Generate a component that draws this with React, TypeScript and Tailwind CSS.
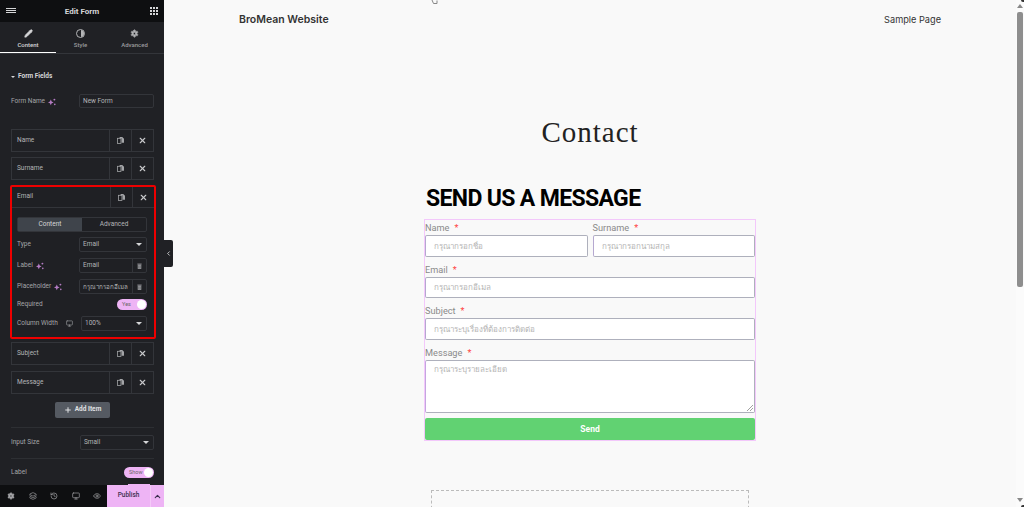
import React from 'react';
import { ChevronLeft, ChevronUp, Eye, History, Layers, Monitor, Pencil, Plus, Settings, X } from 'lucide-react';

function Sparkle() {
  return (
    <svg width="8" height="8" viewBox="0 0 10 10" className="ml-[3px] shrink-0" fill="#b57cc4">
      <path d="M3.5 2 L4.6 4.4 L7 5.5 L4.6 6.6 L3.5 9 L2.4 6.6 L0 5.5 L2.4 4.4 Z" />
      <circle cx="8" cy="2" r="1.2" />
      <circle cx="8.5" cy="8" r="1" />
    </svg>
  );
}

function CloneIcon() {
  return (
    <svg width="7" height="7" viewBox="0 0 8 8" fill="none" className="text-[#a4a5a8]">
      <rect x="0.5" y="1.5" width="4" height="6" stroke="currentColor" strokeWidth="0.9" />
      <path d="M3 0 H6 L8 2 V6.5 H5.2 V1.3 H3 Z" fill="currentColor" />
    </svg>
  );
}

function TrashIcon() {
  return (
    <svg width="5" height="6" viewBox="0 0 7 8" fill="none" className="text-[#a4a5a8]">
      <path d="M0.5 1.2 H6.5" stroke="currentColor" strokeWidth="1" />
      <path d="M1 2 H6 V8 H1 Z" fill="currentColor" />
      <path d="M2.5 3 V7 M4.5 3 V7" stroke="#202125" strokeWidth="0.6" />
    </svg>
  );
}

function RowActions() {
  return (
    <>
      <div className="flex w-[22px] items-center justify-center border-l border-[#33353a]">
        <CloneIcon />
      </div>
      <div className="flex w-[22px] items-center justify-center border-l border-[#33353a]">
        <X size={9} strokeWidth={3} color="#c8c9cb" />
      </div>
    </>
  );
}

function FieldRow({ name }: { name: string }) {
  return (
    <div className="flex h-[23px] items-stretch border border-[#33353a] text-[6.5px] text-[#b4b5b7]">
      <div className="flex flex-1 items-center pl-[5px]">{name}</div>
      <RowActions />
    </div>
  );
}

function SelectBox({ value, className }: { value: string; className: string }) {
  return (
    <div className={`flex h-[15px] items-center justify-between rounded-[2px] border border-[#33353a] px-[3px] text-[6.5px] text-[#b4b5b7] ${className}`}>
      <span>{value}</span>
      <span className="mr-[1px] h-0 w-0 border-x-[3px] border-t-[3px] border-x-transparent border-t-[#d5d6d8]" />
    </div>
  );
}

function TextWithTrash({ value, thai }: { value: string; thai?: boolean }) {
  return (
    <div className="flex h-[15px] w-[68px] items-stretch rounded-[2px] border border-[#33353a] text-[#b4b5b7]">
      <span className={`flex w-[52px] items-center overflow-hidden whitespace-nowrap pl-[3px] ${thai ? "font-['Noto_Sans',sans-serif] text-[6.2px]" : 'text-[6.5px]'}`}>{value}</span>
      <span className="flex flex-1 items-center justify-center border-l border-[#33353a]">
        <TrashIcon />
      </span>
    </div>
  );
}

function Toggle({ text }: { text: string }) {
  return (
    <div className="flex h-[11px] w-[30px] items-center justify-between rounded-full bg-[#eeb4f5] pl-[5px] pr-[1px] text-[5.5px] text-[#666]">
      <span>{text}</span>
      <span className="h-[9px] w-[9px] rounded-full bg-white" />
    </div>
  );
}

function PanelTab({ icon, label, active }: { icon: React.ReactNode; label: string; active?: boolean }) {
  return (
    <div className={`flex flex-1 flex-col items-center pt-[7px] text-[6px] ${active ? 'border-b border-white text-[#d5d6d8]' : 'text-[#9a9b9e]'}`}>
      {icon}
      <span className="mt-[2px]">{label}</span>
    </div>
  );
}

function EditorPanel() {
  return (
    <aside className="relative z-10 flex h-full w-[164px] shrink-0 flex-col bg-[#202125] font-['Roboto',sans-serif]">
      <header className="relative flex h-[22px] shrink-0 items-center justify-center bg-[#0e0f11] pt-[1px] text-[8px] font-bold text-[#d5d6d8]">
        <div className="absolute left-[6px] top-[8px] flex w-[10px] flex-col gap-[1px]">
          <span className="h-[1px] bg-[#d5d6d8]" />
          <span className="h-[1px] bg-[#d5d6d8]" />
          <span className="h-[1px] bg-[#d5d6d8]" />
        </div>
        Edit Form
        <div className="absolute right-[6px] top-[7px] grid grid-cols-3 gap-[1px]">
          {Array.from({ length: 9 }).map((_, i) => (
            <span key={i} className="h-[2px] w-[2px] bg-[#d5d6d8]" />
          ))}
        </div>
      </header>

      <div className="flex h-[32px] shrink-0 border-b border-[#33353a] font-medium">
        <div className="flex w-[56px]">
          <PanelTab active label="Content" icon={<Pencil size={9} fill="#d5d6d8" strokeWidth={2} />} />
        </div>
        <div className="flex w-[49px]">
          <PanelTab
            label="Style"
            icon={
              <span className="flex h-[9px] w-[9px] overflow-hidden rounded-full border border-[#b4b5b7]">
                <span className="w-1/2 bg-transparent" />
                <span className="w-1/2 bg-[#b4b5b7]" />
              </span>
            }
          />
        </div>
        <div className="flex flex-1">
          <PanelTab label="Advanced" icon={<Settings size={9} fill="#b4b5b7" strokeWidth={2} className="[&>circle]:fill-[#202125]" />} />
        </div>
      </div>

      <div className="min-h-0 flex-1 overflow-hidden pl-[11px] pr-[10px]">
        <div className="mt-[17px] flex h-[10px] items-center pt-[2px] text-[6.5px] font-bold text-[#d5d6d8]">
          <span className="mr-[3px] h-0 w-0 border-x-[2px] border-t-[2px] border-x-transparent border-t-[#d5d6d8]" />
          Form Fields
        </div>

        <div className="mt-[13px] flex items-center justify-between text-[6.5px] text-[#a4a5a8]">
          <span className="flex items-center pt-[2px]">Form Name<Sparkle /></span>
          <span className="flex h-[14px] w-[75px] items-center rounded-[2px] border border-[#33353a] pl-[3px] pt-[2px] text-[#b4b5b7]">New Form</span>
        </div>

        <div className="mt-[21px] flex flex-col gap-[5px]">
          <FieldRow name="Name" />
          <FieldRow name="Surname" />
        </div>

        <div className="-ml-[1px] -mr-[2px] mt-[5px] rounded-[2px] border-2 border-[#ee0000] bg-[#1f2024]">
          <div className="flex h-[21px] items-stretch border-b border-[#33353a] text-[6.5px] text-[#b4b5b7]">
            <div className="flex flex-1 items-center pl-[5px]">Email</div>
            <RowActions />
          </div>

          <div className="pb-[6px] pl-[5px] pr-[7px] pt-[9px] text-[6.5px] text-[#a4a5a8]">
            <div className="flex h-[15px] rounded-[2px] border border-[#33353a] text-center">
              <span className="flex w-[64px] items-center justify-center bg-[#3f444b] text-[#d5d6d8]">Content</span>
              <span className="flex flex-1 items-center justify-center text-[#b4b5b7]">Advanced</span>
            </div>
            <div className="mt-[5px] flex h-[15px] items-center justify-between">
              <span>Type</span>
              <SelectBox value="Email" className="w-[68px]" />
            </div>
            <div className="mt-[6px] flex h-[15px] items-center justify-between">
              <span className="flex items-center">Label<Sparkle /></span>
              <TextWithTrash value="Email" />
            </div>
            <div className="mt-[6px] flex h-[15px] items-center justify-between">
              <span className="flex items-center">Placeholder<Sparkle /></span>
              <TextWithTrash thai value="กรุณากรอกอีเมล" />
            </div>
            <div className="mt-[5px] flex h-[11px] items-center justify-between">
              <span>Required</span>
              <Toggle text="Yes" />
            </div>
            <div className="mt-[6px] flex h-[15px] items-center justify-between">
              <span className="flex items-center">Column Width<Monitor size={7} className="ml-[8px]" strokeWidth={2} /></span>
              <SelectBox value="100%" className="w-[66px]" />
            </div>
          </div>
        </div>

        <div className="mt-[3px] flex flex-col gap-[6px]">
          <FieldRow name="Subject" />
          <FieldRow name="Message" />
        </div>

        <div className="mt-[8px] flex justify-center">
          <div className="flex h-[16px] w-[55px] items-center justify-center gap-[3px] rounded-[2px] bg-[#555a62] text-[6.5px] font-bold text-[#e0e1e3]">
            <Plus size={8} strokeWidth={3} />
            Add Item
          </div>
        </div>

        <div className="mt-[9px] border-t border-[#2d2f33]" />
        <div className="mt-[7px] flex items-center justify-between text-[6.5px] text-[#a4a5a8]">
          <span>Input Size</span>
          <SelectBox value="Small" className="w-[74px]" />
        </div>
        <div className="mt-[8px] border-t border-[#2d2f33]" />
        <div className="mt-[8px] flex items-center justify-between text-[6.5px] text-[#a4a5a8]">
          <span>Label</span>
          <Toggle text="Show" />
        </div>
      </div>

      <footer className="relative flex h-[22px] shrink-0 items-center bg-[#0e0f11] text-[#a4a5a8]">
        <span className="absolute -top-[1px] left-[128px] h-[1px] w-[22px] bg-[#eeb4f5]" />
        <div className="flex w-[107px] items-center gap-[13.5px] pl-[7px]">
          <Settings size={8} fill="#a4a5a8" className="[&>circle]:fill-[#0e0f11]" />
          <Layers size={8} />
          <History size={8} />
          <Monitor size={8} />
          <Eye size={8} />
        </div>
        <div className="flex h-full flex-1 items-center bg-[#eeb4f5] text-[6.5px] font-medium text-[#3b2f4f]">
          <span className="flex h-full w-[43px] items-center justify-center">Publish</span>
          <span className="flex h-full flex-1 items-center justify-center border-l border-[#f4c9f8]">
            <ChevronUp size={9} strokeWidth={3} />
          </span>
        </div>
      </footer>

      <div className="absolute left-[164px] top-[240px] flex h-[27px] w-[9px] items-center justify-center rounded-r-[2px] bg-[#202125] text-[#d5d6d8]">
        <ChevronLeft size={7} strokeWidth={3} />
      </div>
    </aside>
  );
}

function FieldLabel({ label }: { label: string }) {
  return (
    <div className="h-[15px] text-[9.2px] leading-[15px] text-[#8a8a8a]">
      {label}
      <span className="ml-[5px] text-[#f44]">*</span>
    </div>
  );
}

function FormField({ label, placeholder, className }: { label: string; placeholder: string; className?: string }) {
  return (
    <div className={className}>
      <FieldLabel label={label} />
      <div className="flex h-[21.5px] items-center rounded-[2px] border border-[#aeb0bc] border-l-[#b5a8d0] bg-white pl-[8px] font-['Noto_Sans',sans-serif] text-[8px] text-[#b4b4b4]">
        {placeholder}
      </div>
    </div>
  );
}

function ContactForm() {
  return (
    <div className="border border-[#f3c8fb] font-['Roboto',sans-serif]">
      <div className="flex gap-[5px]">
        <FormField className="flex-1" label="Name" placeholder="กรุณากรอกชื่อ" />
        <FormField className="flex-1" label="Surname" placeholder="กรุณากรอกนามสกุล" />
      </div>
      <FormField className="mt-[5px]" label="Email" placeholder="กรุณากรอกอีเมล" />
      <FormField className="mt-[5px]" label="Subject" placeholder="กรุณาระบุเรื่องที่ต้องการติดต่อ" />
      <div className="mt-[5px]">
        <FieldLabel label="Message" />
        <div className="relative h-[53px] rounded-[2px] border border-[#aeb0bc] border-l-[#c4a6e0] bg-white pl-[8px] pt-[2px] font-['Noto_Sans',sans-serif] text-[8px] text-[#b4b4b4]">
          กรุณาระบุรายละเอียด
          <svg width="6" height="6" viewBox="0 0 6 6" className="absolute bottom-[1px] right-[1px]" stroke="#888" strokeWidth="0.8">
            <path d="M0 6 L6 0 M3 6 L6 3" />
          </svg>
        </div>
      </div>
      <div className="mt-[5.5px] flex h-[22px] items-center justify-center rounded-[2px] bg-[#61d272] text-[8.5px] font-bold text-white">
        Send
      </div>
    </div>
  );
}

function PagePreview() {
  return (
    <main className="relative min-w-0 flex-1 overflow-hidden bg-[#f9f9f9]">
      {/* stray mouse pointer cut off by the top of the capture */}
      <svg width="7" height="4" viewBox="0 0 7 4" className="absolute left-[267px] top-0" fill="none" stroke="#888" strokeWidth="1">
        <path d="M1 0 L2.5 3.5 H6 V0.5" />
      </svg>

      <nav className="flex h-[40px] items-center justify-between px-[75px] font-['Inter',sans-serif] text-[#333]">
        <span className="text-[10.5px] font-semibold">BroMean Website</span>
        <span className="text-[9.2px]">Sample Page</span>
      </nav>

      <h1 className="mt-[77px] text-center font-['Liberation_Serif',serif] text-[29px] leading-[30px] tracking-[1px] text-[#222]">
        Contact
      </h1>

      <div className="ml-[260px] mt-[37px] w-[332px]">
        <h2 className="pl-[2px] font-['Roboto',sans-serif] text-[23px] font-bold leading-[30px] tracking-[-0.65px] text-black">
          SEND US A MESSAGE
        </h2>
        <div className="mt-[5px]">
          <ContactForm />
        </div>
      </div>

      <div className="ml-[267px] mt-[49px] h-[40px] w-[318px] border border-dashed border-[#bbb]" />
    </main>
  );
}

function Scrollbar() {
  return (
    <div className="relative flex h-full w-[8px] shrink-0 flex-col items-center bg-[#fbfbfb] pb-[5px]">
      <span className="absolute right-0 top-0 h-[2px] w-[3px] rounded-bl-[2px] bg-[#333]" />
      <span className="mt-[4px] h-0 w-0 border-x-[3px] border-b-[4px] border-x-transparent border-b-[#888]" />
      <span className="mt-[4px] h-[275px] w-[6px] rounded-[2px] bg-[#8e8e8e]" />
      <span className="mt-auto h-0 w-0 border-x-[3px] border-t-[4px] border-x-transparent border-t-[#888]" />
      <span className="absolute bottom-0 right-0 h-[2px] w-[3px] rounded-tl-[2px] bg-[#333]" />
    </div>
  );
}

export default function App() {
  return (
    <div className="flex h-[507px] w-[1024px] overflow-hidden">
      <EditorPanel />
      <PagePreview />
      <Scrollbar />
    </div>
  );
}
